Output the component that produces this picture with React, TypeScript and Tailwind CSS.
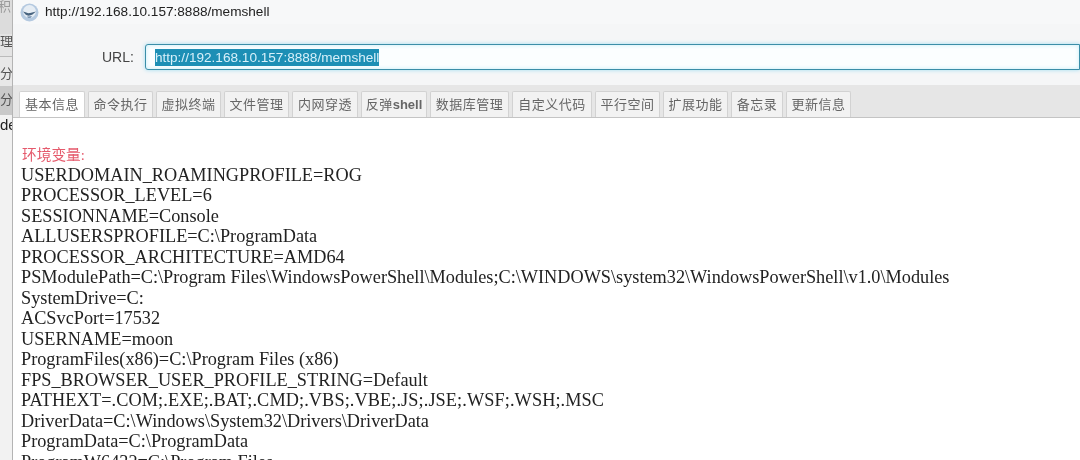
const tabs = [
  { t: "基本信息", w: "w-[66px]" },
  { t: "命令执行", w: "w-[65px]" },
  { t: "虚拟终端", w: "w-[65px]" },
  { t: "文件管理", w: "w-[65px]" },
  { t: "内网穿透", w: "w-[66px]" },
  { t: "反弹shell", w: "w-[66px]" },
  { t: "数据库管理", w: "w-[79px]" },
  { t: "自定义代码", w: "w-[80px]" },
  { t: "平行空间", w: "w-[65px]" },
  { t: "扩展功能", w: "w-[65px]" },
  { t: "备忘录", w: "w-[52px]" },
  { t: "更新信息", w: "w-[65px]" },
];

const lines = [
  "USERDOMAIN_ROAMINGPROFILE=ROG",
  "PROCESSOR_LEVEL=6",
  "SESSIONNAME=Console",
  "ALLUSERSPROFILE=C:\\ProgramData",
  "PROCESSOR_ARCHITECTURE=AMD64",
  "PSModulePath=C:\\Program Files\\WindowsPowerShell\\Modules;C:\\WINDOWS\\system32\\WindowsPowerShell\\v1.0\\Modules",
  "SystemDrive=C:",
  "ACSvcPort=17532",
  "USERNAME=moon",
  "ProgramFiles(x86)=C:\\Program Files (x86)",
  "FPS_BROWSER_USER_PROFILE_STRING=Default",
  "PATHEXT=.COM;.EXE;.BAT;.CMD;.VBS;.VBE;.JS;.JSE;.WSF;.WSH;.MSC",
  "DriverData=C:\\Windows\\System32\\Drivers\\DriverData",
  "ProgramData=C:\\ProgramData",
  "ProgramW6432=C:\\Program Files",
];

const sans = "font-['Liberation_Sans','Noto_Sans_CJK_SC',sans-serif]";

function GlobeIcon() {
  return (
    <svg width="19" height="19" viewBox="0 0 19 19" className="shrink-0">
      <circle cx="9.5" cy="9.5" r="9" fill="#b4c9e0" />
      <circle cx="9.5" cy="8.5" r="6.5" fill="#e6edf4" />
      <path d="M3 8.5 C6 9.5 8 10.5 10 10 L16 8.5 L12.5 11.5 C10 13 7 13 5.5 11.5 Z" fill="#47637f" />
      <path d="M7 13.5 L12 13 L10.5 15 L8 15 Z" fill="#7d97b3" />
    </svg>
  );
}

export default function App() {
  return (
    <div className={`flex h-[460px] w-[1080px] overflow-hidden bg-white blur-[0.4px] ${sans}`}>
      <div className="flex w-[12px] shrink-0 flex-col overflow-hidden bg-[#e4e4e4] text-[13px] leading-none text-[#555]">
        <div className="h-[34px] whitespace-nowrap bg-[#dcdcdc] pt-0 text-[#999]">
          <span className="-ml-[2px] block">积</span>
        </div>
        <div className="h-[23px] whitespace-nowrap border-b border-[#bbb] pt-px">理</div>
        <div className="h-[29px] whitespace-nowrap bg-[#e8e8e8] pt-[10px]">分</div>
        <div className="h-[29px] whitespace-nowrap bg-[#c9c9c9] pt-[7px]">分</div>
        <div className="flex-1 bg-[#f2f2f2] pt-[2px] text-[15px] text-[#222]">de</div>
      </div>

      <div className="flex min-w-0 flex-1 flex-col border-l border-[#b4b4b4]">
        <div className="flex h-[24px] shrink-0 items-center gap-[6px] bg-[#f7f8f9] pl-[7px] text-[13.6px] text-[#222]">
          <GlobeIcon />
          <span className="whitespace-nowrap">http://192.168.10.157:8888/memshell</span>
        </div>

        <div className="flex h-[61px] shrink-0 items-start bg-[#f5f6f7] pl-[89px] pt-[20px]">
          <span className="mr-[11px] mt-[5px] text-[14px] leading-[16px] text-[#444]">URL:</span>
          <div className="flex h-[26px] flex-1 items-center rounded-l-[3px] border border-[#3b8ea8] bg-[#fbfeff] pl-[9px] shadow-[0_0_4px_#9fdcf0,inset_0_0_4px_#c4edf8]">
            <span className="bg-[#1d8fb5] text-[13.6px] leading-[17px] text-[#d6f0fa]">
              http://192.168.10.157:8888/memshell
            </span>
          </div>
        </div>

        <div className="flex h-[33px] shrink-0 items-end gap-[3px] border-b border-[#c4c4c4] bg-[#e6e6e6] pl-[6px]">
          {tabs.map((tab, i) => (
            <div
              key={tab.t}
              className={`flex h-[26px] items-center justify-center whitespace-nowrap rounded-t-[2px] border border-b-0 border-[#d2d2d2] text-[13px] tracking-[0.5px] text-[#666] ${tab.w} ${
                i === 0 ? "bg-white" : "bg-[#f2f2f2]"
              }`}
            >
              {tab.t.includes("shell") ? (
                <>
                  反弹<span className="font-bold tracking-normal">shell</span>
                </>
              ) : (
                tab.t
              )}
            </div>
          ))}
        </div>

        <div className="flex-1 overflow-hidden bg-white pl-[8px] pt-[26.6px] font-['Liberation_Serif','Noto_Sans_CJK_SC',serif] text-[18.25px] leading-[20.5px] text-[#222]">
          <div className="pl-px text-[14.7px] leading-[20px] text-[#e55a6c]">环境变量:</div>
          {lines.map((l) => (
            <div key={l} className={`whitespace-nowrap ${l.startsWith("PATHEXT") ? "tracking-[0.1px]" : ""}`}>
              {l}
            </div>
          ))}
        </div>
      </div>
    </div>
  );
}
